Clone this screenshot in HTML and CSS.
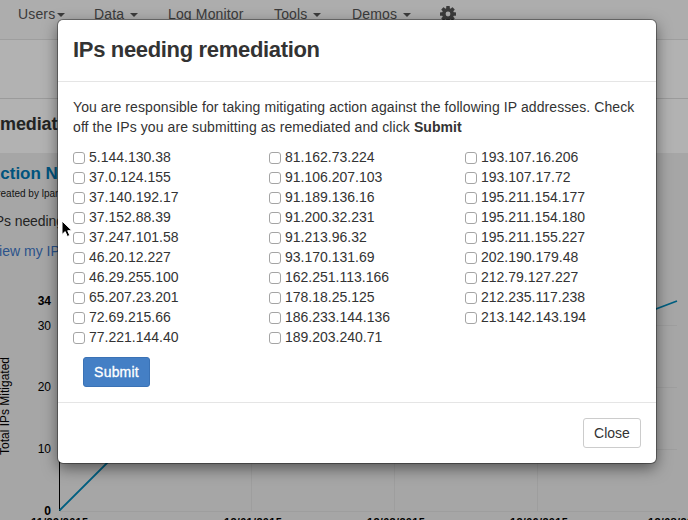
FILE: index.html
```html
<!DOCTYPE html>
<html lang="en">
<head>
<meta charset="utf-8">
<title>IPs needing remediation</title>
<link rel="stylesheet" href="styles.css">
</head>
<body>
<div class="page">
  <nav class="navbar">
    <span class="nav-users">Users<i class="caret tight"></i></span>
    <span class="nav-data">Data<i class="caret"></i></span>
    <span class="nav-log">Log Monitor</span>
    <span class="nav-tools">Tools<i class="caret"></i></span>
    <span class="nav-demos">Demos<i class="caret"></i></span>
    <svg class="gear" viewBox="0 0 16 16"><g fill="#555"><rect x="6.2" y="0" width="3.6" height="16" rx=".6"/><rect x="6.2" y="0" width="3.6" height="16" rx=".6" transform="rotate(45 8 8)"/><rect x="6.2" y="0" width="3.6" height="16" rx=".6" transform="rotate(90 8 8)"/><rect x="6.2" y="0" width="3.6" height="16" rx=".6" transform="rotate(135 8 8)"/><circle cx="8" cy="8" r="6"/></g><circle cx="8" cy="8" r="2.4" fill="#f8f8f8"/></svg>
  </nav>
  <div class="subhead"></div>
  <h2 class="section-title">mediat</h2>
  <section class="panel">
    <h3>Action N</h3>
    <p class="byline">Created by lpar</p>
    <p class="need">IPs needing</p>
    <a class="view">View my IP</a>
    <svg class="chart" viewBox="0 0 688 260">
      <g stroke="#e2e2e2" stroke-width="1">
        <path d="M60 65.500H677M60 127.500H677M60 189.500H677M60 251.500H677"/>
        <path d="M251.500 41V251M394.500 41V251M537.500 41V251"/>
      </g>
      <path d="M59.500 41V251" stroke="#000"/>
      <path d="M59.500 250.500L108 202L300 120L537 94L677 41" fill="none" stroke="#0088b8" stroke-width="1.800"/>
      <g class="ticks">
        <text class="strong" x="51" y="45">34</text>
        <text x="51" y="70">30</text>
        <text x="51" y="131">20</text>
        <text x="51" y="193">10</text>
        <text class="strong" x="51" y="255">0</text>
      </g>
      <text class="axis" transform="translate(9 195) rotate(-90)">Total IPs Mitigated</text>
    </svg>
    <div class="dates"><b>11/29/2015</b><b>12/01/2015</b><b>12/03/2015</b><b>12/06/2015</b><b>12/08/2015</b></div>
  </section>
</div>
<div class="backdrop">
  <div class="modal">
    <header><h1>IPs needing remediation</h1></header>
    <main>
      <p>You are responsible for taking mitigating action against the following IP addresses. Check<br>off the IPs you are submitting as remediated and click <b>Submit</b></p>
      <div class="ips">
        <div>
          <label><input type="checkbox">5.144.130.38</label>
          <label><input type="checkbox">37.0.124.155</label>
          <label><input type="checkbox">37.140.192.17</label>
          <label><input type="checkbox">37.152.88.39</label>
          <label><input type="checkbox">37.247.101.58</label>
          <label><input type="checkbox">46.20.12.227</label>
          <label><input type="checkbox">46.29.255.100</label>
          <label><input type="checkbox">65.207.23.201</label>
          <label><input type="checkbox">72.69.215.66</label>
          <label><input type="checkbox">77.221.144.40</label>
        </div>
        <div>
          <label><input type="checkbox">81.162.73.224</label>
          <label><input type="checkbox">91.106.207.103</label>
          <label><input type="checkbox">91.189.136.16</label>
          <label><input type="checkbox">91.200.32.231</label>
          <label><input type="checkbox">91.213.96.32</label>
          <label><input type="checkbox">93.170.131.69</label>
          <label><input type="checkbox">162.251.113.166</label>
          <label><input type="checkbox">178.18.25.125</label>
          <label><input type="checkbox">186.233.144.136</label>
          <label><input type="checkbox">189.203.240.71</label>
        </div>
        <div>
          <label><input type="checkbox">193.107.16.206</label>
          <label><input type="checkbox">193.107.17.72</label>
          <label><input type="checkbox">195.211.154.177</label>
          <label><input type="checkbox">195.211.154.180</label>
          <label><input type="checkbox">195.211.155.227</label>
          <label><input type="checkbox">202.190.179.48</label>
          <label><input type="checkbox">212.79.127.227</label>
          <label><input type="checkbox">212.235.117.238</label>
          <label><input type="checkbox">213.142.143.194</label>
        </div>
      </div>
      <button class="submit">Submit</button>
    </main>
    <footer><button class="close">Close</button></footer>
  </div>
</div>
<svg class="cursor" viewBox="0 0 12 18"><path d="M1 1V14.500L4.200 11.600L6.300 16.500L8.800 15.400L6.700 10.700H11Z" fill="#000" stroke="#fff" stroke-width="1"/></svg>
</body>
</html>
```
FILE: styles.css
```css
* { box-sizing: border-box; }
body {
  margin: 0;
  width: 688px;
  height: 520px;
  overflow: hidden;
  position: relative;
  font: 14px/20px "Liberation Sans", Arial, sans-serif;
  color: #333;
  background: #fff;
}
h1, h2, h3, p { margin: 0; }
.page { height: 520px; overflow: hidden; }
.navbar {
  display: grid;
  grid-template-columns: 76px 74px 106px 78px 88px 1fr;
  height: 40px;
  padding: 4px 0 0 18px;
  background: #f8f8f8;
  border-bottom: 1px solid #e2e2e2;
  color: #555;
  white-space: nowrap;
  letter-spacing: .15px;
}
.caret {
  display: inline-block;
  margin-left: 6px;
  vertical-align: 2px;
  border: 4px solid transparent;
  border-top-color: #555;
  border-bottom: 0;
}
.caret.tight { margin-left: 2px; }
.gear { width: 16px; height: 16px; margin-top: 2px; }
.subhead { height: 59px; border-bottom: 1px solid #dedede; }
.section-title {
  height: 54px;
  padding-top: 13px;
  font-size: 18px;
  line-height: 24px;
  letter-spacing: -.1px;
}
.panel { height: 367px; background: #eee; white-space: nowrap; }
.panel h3 {
  margin-left: -12px;
  padding-top: 11px;
  font-size: 17px;
  line-height: 20px;
  color: #0079b5;
}
.byline {
  margin: 4px 0 0 -10px;
  font-size: 10px;
  line-height: 12px;
  color: #222;
}
.need { margin: 11px 0 0 -9px; letter-spacing: -.1px; }
.view { display: block; margin: 10px 0 0 -10px; color: #4078c8; }
.chart { display: block; width: 688px; height: 260px; margin-top: -1px; overflow: visible; }
.ticks { font-size: 12px; text-anchor: end; fill: #000; }
.strong { font-weight: bold; }
.axis { font-size: 12px; fill: #000; }
.dates {
  display: grid;
  grid-template-columns: 193px 143px 143px 138px 90px;
  padding-left: 31px;
  margin-top: -5px;
  font-size: 11px;
  line-height: 14px;
  letter-spacing: .3px;
  color: #000;
}
.backdrop {
  position: absolute;
  inset: 0;
  padding: 20px 32px 57px 58px;
  background: rgba(0, 0, 0, .3);
}
.modal {
  width: 598px;
  height: 443px;
  background: #fff;
  border-radius: 5px;
  box-shadow: 0 0 0 1px rgba(0, 0, 0, .35), 0 5px 15px rgba(0, 0, 0, .5);
}
.modal header { height: 62px; padding: 14px 15px; border-bottom: 1px solid #e5e5e5; }
.modal h1 { font-size: 22px; line-height: 31px; width: max-content; letter-spacing: -.33px; }
.modal main { height: 320px; padding: 15px; }
.modal p { white-space: nowrap; height: 50px; letter-spacing: .09px; }
.ips { display: grid; grid-template-columns: repeat(3, 196px); height: 200px; }
.ips label { display: flex; height: 20px; }
.ips input {
  appearance: none;
  width: 12px;
  height: 12px;
  margin: 5px 4px 0 0;
  border: 1px solid #a5a5a5;
  border-radius: 3px;
  background: #fff;
}
button { font: 14px/20px "Liberation Sans", Arial, sans-serif; padding: 4px 0; border-radius: 3px; }
.submit {
  display: block;
  width: 67px;
  height: 30px;
  margin: 10px 0 0 10px;
  border: 1px solid #3a72b5;
  background: #447fc5;
  color: #fff;
  letter-spacing: .2px;
  -webkit-text-stroke: .3px #fff;
}
.modal footer {
  display: flex;
  justify-content: flex-end;
  height: 61px;
  padding: 15px 15px 0;
  border-top: 1px solid #e5e5e5;
}
.close { width: 58px; height: 30px; border: 1px solid #ccc; background: #fff; color: #333; }
.cursor { position: absolute; left: 61px; top: 220px; width: 12px; height: 18px; }
```
